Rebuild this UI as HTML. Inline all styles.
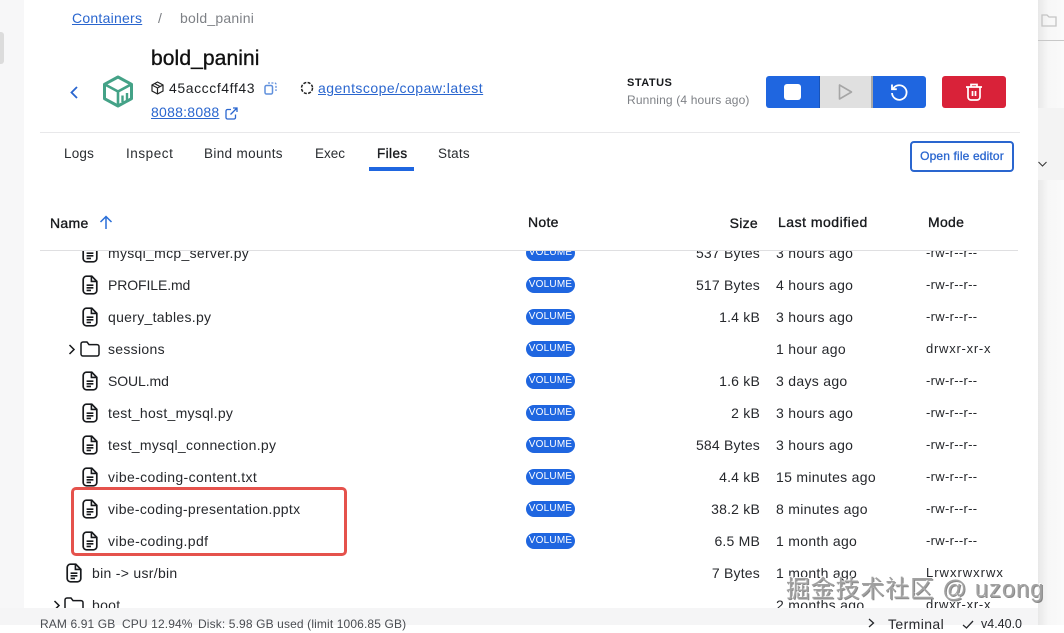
<!DOCTYPE html>
<html><head><meta charset="utf-8">
<style>
html,body{margin:0;padding:0}
body{width:1064px;height:625px;position:relative;overflow:hidden;background:#fff;font-family:"Liberation Sans","Noto Sans CJK SC",sans-serif;color:#17191c;font-size:14px}
.t{position:absolute;white-space:nowrap;line-height:18px}
.r{text-align:right}
a{color:#2a66cf;text-decoration:underline}
.tab{top:145px;font-size:13.5px;color:#2a2d31;letter-spacing:.35px}
.h{top:213px;font-size:14px;-webkit-text-stroke:.35px #17191c;color:#17191c;letter-spacing:.3px}
.b{position:absolute;left:526px;width:49px;height:16px;border-radius:8px;background:#1f66e0;color:#fff;font-size:10px;letter-spacing:.2px;line-height:16px;text-align:center}
svg{position:absolute;overflow:visible}
#rows{position:absolute;left:24px;top:251px;width:1014px;height:357px;overflow:hidden;letter-spacing:.3px}
#rows .t{color:#26282c}
#rows .r{letter-spacing:.2px}
#rows .m{font-size:13px;letter-spacing:.3px}
#rows .x{font-size:13px;letter-spacing:.75px}
</style></head><body>
<svg width="0" height="0" style="position:absolute"><defs>
<symbol id="file" viewBox="0 0 16 20"><path d="M4.500 1.200H9.800L14.800 6.400V15.500A3.300 3.300 0 0 1 11.500 18.800H4.500A3.300 3.300 0 0 1 1.200 15.500V4.500A3.300 3.300 0 0 1 4.500 1.200Z" fill="none" stroke="#17191c" stroke-width="1.700"/><path d="M9.400 1.400V6.400H14.600M4.600 10.200H11.400M4.600 12.800H11.400M4.600 15.400H9" fill="none" stroke="#17191c" stroke-width="1.600"/></symbol>
<symbol id="folder" viewBox="0 0 20 16"><path d="M1 3A2 2 0 0 1 3 1H7L9 3.600H17A2 2 0 0 1 19 5.600V13A2 2 0 0 1 17 15H3A2 2 0 0 1 1 13Z" fill="none" stroke="#17191c" stroke-width="1.500"/></symbol>
</defs></svg>

<div style="position:absolute;left:0;top:0;width:24px;height:625px;background:#f7f7f8"></div>
<div style="position:absolute;left:0;top:32px;width:4px;height:32px;background:#dcdcdc;border-radius:0 3px 3px 0"></div>
<div style="position:absolute;left:1038px;top:0;width:26px;height:625px;background:linear-gradient(90deg,#e8e8e8,#f7f7f7 40%,#fafafa)"></div>
<div style="position:absolute;left:1038px;top:40px;width:26px;height:1px;background:#c8c8c8"></div>
<div style="position:absolute;left:1038px;top:108px;width:26px;height:72px;background:#f3f3f3"></div>
<svg style="left:1041px;top:14px" width="16" height="13" viewBox="0 0 16 13"><path d="M1 1H6L8 3H15V12H1Z" fill="none" stroke="#c4c4c4" stroke-width="1.300"/></svg>
<svg style="left:1038px;top:161px" width="9" height="6" viewBox="0 0 9 6"><path d="M.5 1 4.500 5 8.500 1" fill="none" stroke="#333" stroke-width="1"/></svg>

<div class="t" style="left:72px;top:9px;font-size:14px;letter-spacing:.25px"><a>Containers</a></div>
<div class="t" style="left:158px;top:9px;color:#7a7d82">/</div>
<div class="t" style="left:180px;top:9px;color:#7e8186;font-size:14px;letter-spacing:.22px">bold_panini</div>

<svg style="left:69px;top:86px" width="10" height="13" viewBox="0 0 10 13"><path d="M8 1 2.500 6.500 8 12" fill="none" stroke="#2a66cf" stroke-width="1.800"/></svg>
<svg style="left:102px;top:75px" width="32" height="33" viewBox="0 0 32 33"><path d="M16 2 29.500 9.300V23.700L16 31 2.500 23.700V9.300Z" fill="none" stroke="#44a287" stroke-width="3" stroke-linejoin="round"/><path d="M3 9.500 16 16.500 29 9.500M16 16.500V30" fill="none" stroke="#44a287" stroke-width="2.600" stroke-linejoin="round"/><path d="M20.500 20.500V27M25 18V25" stroke="#44a287" stroke-width="2.400" fill="none"/></svg>

<div class="t" style="left:151px;top:46px;font-size:21px;line-height:26px;color:#111;letter-spacing:.1px;-webkit-text-stroke:.35px #111">bold_panini</div>

<svg style="left:151px;top:81px" width="13" height="14" viewBox="0 0 13 14"><path d="M6.500 1 12 4V10L6.500 13 1 10V4Z M1 4 6.500 7 12 4 M6.500 7V13 M3.500 2.500 9 5.500" fill="none" stroke="#222" stroke-width="1.200"/></svg>
<div class="t" style="left:169px;top:79px;font-size:14px;color:#1d1f22;letter-spacing:.58px">45acccf4ff43</div>
<svg style="left:264px;top:82px" width="13" height="13" viewBox="0 0 13 13"><rect x="1" y="3.500" width="7.500" height="8.500" rx="1.500" fill="none" stroke="#5f8fdc" stroke-width="1.500"/><path d="M4 1H10.500Q12 1 12 2.500V9" fill="none" stroke="#5f8fdc" stroke-width="1.300" stroke-dasharray="2 1.400"/></svg>
<svg style="left:300px;top:81px" width="14" height="14" viewBox="0 0 14 14"><circle cx="7" cy="7" r="5.500" fill="none" stroke="#222" stroke-width="1.500" stroke-dasharray="3 1.400"/></svg>
<div class="t" style="left:318px;top:79px;font-size:14px;letter-spacing:.48px"><a>agentscope/copaw:latest</a></div>
<div class="t" style="left:151px;top:103px;font-size:14px;letter-spacing:.25px"><a>8088:8088</a></div>
<svg style="left:225px;top:107px" width="13" height="13" viewBox="0 0 13 13"><path d="M6 2.500H2.500A1.500 1.500 0 0 0 1 4V10.500A1.500 1.500 0 0 0 2.500 12H9A1.500 1.500 0 0 0 10.500 10.500V7.500M5.500 7.500 12 1M8 1H12V5" fill="none" stroke="#2a66cf" stroke-width="1.300"/></svg>

<div class="t" style="left:627px;top:74px;font-size:11px;font-weight:bold;color:#17191c;letter-spacing:.5px">STATUS</div>
<div class="t" style="left:627px;top:91px;font-size:12px;color:#7e8186;letter-spacing:.15px">Running (4 hours ago)</div>

<div style="position:absolute;left:766px;top:76px;width:160px;height:32px;border-radius:3px;overflow:hidden;background:#1f66e0">
  <div style="position:absolute;left:53px;top:0;width:1px;height:32px;background:#1853b8"></div>
  <div style="position:absolute;left:54px;top:0;width:53px;height:32px;background:#e0e0e0"></div>
  <div style="position:absolute;left:105px;top:0;width:2px;height:32px;background:#a8a8a8"></div>
</div>
<div style="position:absolute;left:784px;top:84px;width:17px;height:16px;background:#fff;border-radius:3px"></div>
<svg style="left:838px;top:83px" width="15" height="18" viewBox="0 0 15 18"><path d="M1.500 2V16L13.500 9Z" fill="none" stroke="#a6a6a6" stroke-width="1.600" stroke-linejoin="round"/></svg>
<svg style="left:890px;top:83px" width="19" height="18" viewBox="0 0 19 18"><path d="M3.200 5.500A7.300 7.300 0 1 1 2 10" fill="none" stroke="#fff" stroke-width="1.800"/><path d="M2 1.500V6.200H6.800" fill="none" stroke="#fff" stroke-width="1.800"/></svg>
<div style="position:absolute;left:942px;top:76px;width:64px;height:32px;border-radius:3px;background:#d92239"></div>
<svg style="left:965px;top:83px" width="18" height="18" viewBox="0 0 18 18"><path d="M1 4H17M6 4V1.500H12V4M3 4V14A3 3 0 0 0 6 17H12A3 3 0 0 0 15 14V4M7.500 8V13M10.500 8V13" fill="none" stroke="#fff" stroke-width="1.700"/></svg>

<div style="position:absolute;left:40px;top:132px;width:980px;height:1px;background:#e8e8ea"></div>

<div class="t tab" style="left:64px;letter-spacing:.2px">Logs</div>
<div class="t tab" style="left:126px;letter-spacing:.55px">Inspect</div>
<div class="t tab" style="left:204px">Bind mounts</div>
<div class="t tab" style="left:315px;letter-spacing:0">Exec</div>
<div class="t tab" style="left:377px;-webkit-text-stroke:.35px #17191c;color:#17191c;letter-spacing:.4px">Files</div>
<div class="t tab" style="left:438px;letter-spacing:.2px">Stats</div>
<div style="position:absolute;left:369px;top:167px;width:45px;height:4px;background:#1f66e0"></div>

<div style="position:absolute;left:910px;top:141px;width:100px;height:27px;border:2px solid #2a66cf;border-radius:4px;color:#2a66cf;font-size:12px;-webkit-text-stroke:.3px #2a66cf;letter-spacing:.15px;line-height:26px;text-align:center">Open file editor</div>

<div class="t h" style="left:50px;top:214px">Name</div>
<svg style="left:99px;top:215px" width="14" height="14" viewBox="0 0 14 14"><path d="M7 14V1.500M1.500 7 7 1.500 12.500 7" fill="none" stroke="#2a6fd8" stroke-width="1.500"/></svg>
<div class="t h" style="left:528px">Note</div>
<div class="t h r" style="left:658px;width:100px;top:214px">Size</div>
<div class="t h" style="left:778px;letter-spacing:.5px">Last modified</div>
<div class="t h" style="left:928px">Mode</div>
<div style="position:absolute;left:40px;top:250px;width:978px;height:1px;background:#dfdfe1"></div>

<div id="rows">
<svg style="left:58px;top:-8px" width="16" height="20"><use href="#file"/></svg>
<div class="t" style="left:84px;top:-7px">mysql_mcp_server.py</div><div class="b" style="left:502px;top:-6px">VOLUME</div><div class="t r" style="left:636px;width:100px;top:-7px">537 Bytes</div><div class="t" style="left:752px;top:-7px">3 hours ago</div><div class="t m" style="left:902px;top:-7px">-rw-r--r--</div>

<svg style="left:58px;top:24px" width="16" height="20"><use href="#file"/></svg>
<div class="t" style="left:84px;top:25px;letter-spacing:-.1px">PROFILE.md</div><div class="b" style="left:502px;top:26px">VOLUME</div><div class="t r" style="left:636px;width:100px;top:25px">517 Bytes</div><div class="t" style="left:752px;top:25px">4 hours ago</div><div class="t m" style="left:902px;top:25px">-rw-r--r--</div>

<svg style="left:58px;top:56px" width="16" height="20"><use href="#file"/></svg>
<div class="t" style="left:84px;top:57px">query_tables.py</div><div class="b" style="left:502px;top:58px">VOLUME</div><div class="t r" style="left:636px;width:100px;top:57px">1.4 kB</div><div class="t" style="left:752px;top:57px">3 hours ago</div><div class="t m" style="left:902px;top:57px">-rw-r--r--</div>

<svg style="left:44px;top:93px" width="8" height="11" viewBox="0 0 8 11"><path d="M1.500 1 6 5.500 1.500 10" fill="none" stroke="#17191c" stroke-width="1.500"/></svg>
<svg style="left:56px;top:90px" width="20" height="16"><use href="#folder"/></svg>
<div class="t" style="left:84px;top:89px">sessions</div><div class="b" style="left:502px;top:90px">VOLUME</div><div class="t" style="left:752px;top:89px">1 hour ago</div><div class="t x" style="left:902px;top:89px">drwxr-xr-x</div>

<svg style="left:58px;top:120px" width="16" height="20"><use href="#file"/></svg>
<div class="t" style="left:84px;top:121px;letter-spacing:-.1px">SOUL.md</div><div class="b" style="left:502px;top:122px">VOLUME</div><div class="t r" style="left:636px;width:100px;top:121px">1.6 kB</div><div class="t" style="left:752px;top:121px">3 days ago</div><div class="t m" style="left:902px;top:121px">-rw-r--r--</div>

<svg style="left:58px;top:152px" width="16" height="20"><use href="#file"/></svg>
<div class="t" style="left:84px;top:153px">test_host_mysql.py</div><div class="b" style="left:502px;top:154px">VOLUME</div><div class="t r" style="left:636px;width:100px;top:153px">2 kB</div><div class="t" style="left:752px;top:153px">3 hours ago</div><div class="t m" style="left:902px;top:153px">-rw-r--r--</div>

<svg style="left:58px;top:184px" width="16" height="20"><use href="#file"/></svg>
<div class="t" style="left:84px;top:185px">test_mysql_connection.py</div><div class="b" style="left:502px;top:186px">VOLUME</div><div class="t r" style="left:636px;width:100px;top:185px">584 Bytes</div><div class="t" style="left:752px;top:185px">3 hours ago</div><div class="t m" style="left:902px;top:185px">-rw-r--r--</div>

<svg style="left:58px;top:216px" width="16" height="20"><use href="#file"/></svg>
<div class="t" style="left:84px;top:217px;letter-spacing:.36px">vibe-coding-content.txt</div><div class="b" style="left:502px;top:218px">VOLUME</div><div class="t r" style="left:636px;width:100px;top:217px">4.4 kB</div><div class="t" style="left:752px;top:217px">15 minutes ago</div><div class="t m" style="left:902px;top:217px">-rw-r--r--</div>

<svg style="left:58px;top:248px" width="16" height="20"><use href="#file"/></svg>
<div class="t" style="left:84px;top:249px">vibe-coding-presentation.pptx</div><div class="b" style="left:502px;top:250px">VOLUME</div><div class="t r" style="left:636px;width:100px;top:249px">38.2 kB</div><div class="t" style="left:752px;top:249px">8 minutes ago</div><div class="t m" style="left:902px;top:249px">-rw-r--r--</div>

<svg style="left:58px;top:280px" width="16" height="20"><use href="#file"/></svg>
<div class="t" style="left:84px;top:281px;letter-spacing:.36px">vibe-coding.pdf</div><div class="b" style="left:502px;top:282px">VOLUME</div><div class="t r" style="left:636px;width:100px;top:281px">6.5 MB</div><div class="t" style="left:752px;top:281px">1 month ago</div><div class="t m" style="left:902px;top:281px">-rw-r--r--</div>

<svg style="left:42px;top:312px" width="16" height="20"><use href="#file"/></svg>
<div class="t" style="left:68px;top:313px">bin -&gt; usr/bin</div><div class="t r" style="left:636px;width:100px;top:313px">7 Bytes</div><div class="t" style="left:752px;top:313px">1 month ago</div><div class="t x" style="left:902px;top:313px;letter-spacing:1px">Lrwxrwxrwx</div>

<svg style="left:29px;top:349px" width="8" height="11" viewBox="0 0 8 11"><path d="M1.500 1 6 5.500 1.500 10" fill="none" stroke="#17191c" stroke-width="1.500"/></svg>
<svg style="left:40px;top:346px" width="20" height="16"><use href="#folder"/></svg>
<div class="t" style="left:68px;top:345px">boot</div><div class="t" style="left:752px;top:345px">2 months ago</div><div class="t x" style="left:902px;top:345px">drwxr-xr-x</div>
</div>

<div style="position:absolute;left:71px;top:487px;width:270px;height:63px;border:3px solid #e5524c;border-radius:5px"></div>

<div style="position:absolute;left:0;top:608px;width:1038px;height:17px;background:#f5f5f6"></div>
<div class="t" style="left:40px;top:615px;font-size:12px;color:#4a4d52;letter-spacing:.12px">RAM 6.91 GB</div>
<div class="t" style="left:122px;top:615px;font-size:12px;color:#4a4d52;letter-spacing:.12px">CPU 12.94%</div>
<div class="t" style="left:198px;top:615px;font-size:12px;color:#4a4d52;letter-spacing:.13px">Disk: 5.98 GB used (limit 1006.85 GB)</div>
<div class="t" style="left:888px;top:615px;font-size:14px;color:#26282c;letter-spacing:.4px">Terminal</div>
<svg style="left:868px;top:618px" width="7" height="10" viewBox="0 0 7 10"><path d="M1 1 5.500 5 1 9" fill="none" stroke="#26282c" stroke-width="1.300"/></svg>
<svg style="left:962px;top:620px" width="12" height="9" viewBox="0 0 12 9"><path d="M1 5 4.500 8 11 1" fill="none" stroke="#26282c" stroke-width="1.300"/></svg>
<div class="t" style="left:981px;top:615px;font-size:12.500px;color:#26282c">v4.40.0</div>

<div class="t" style="left:786px;top:575px;font-size:24px;line-height:30px;color:#a2a2a2;letter-spacing:.8px;text-shadow:-1px -1px 0 rgba(255,255,255,.9),1px 1px 0 rgba(60,60,60,.6)">掘金技术社区 @ uzong</div>
</body></html>
